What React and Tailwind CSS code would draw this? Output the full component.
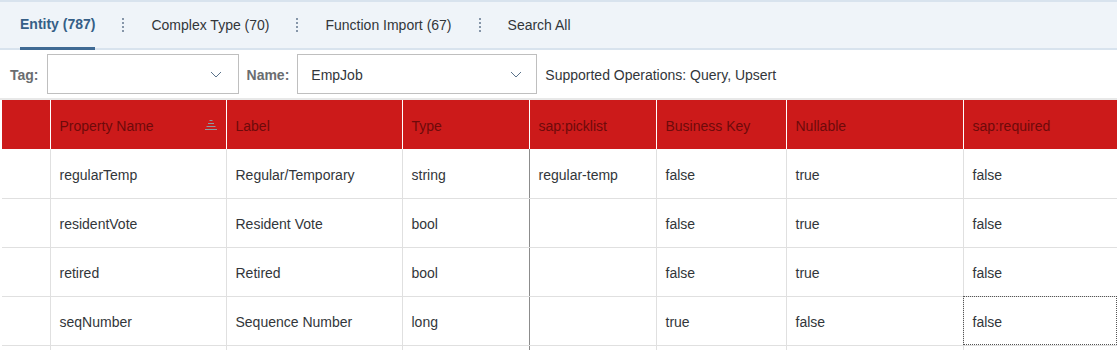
import React from "react";

const cols = [
  { key: "sel", label: "", w: 48 },
  { key: "name", label: "Property Name", w: 176, sort: true },
  { key: "label", label: "Label", w: 176 },
  { key: "type", label: "Type", w: 127 },
  { key: "pick", label: "sap:picklist", w: 127 },
  { key: "bkey", label: "Business Key", w: 130 },
  { key: "nullable", label: "Nullable", w: 177 },
  { key: "req", label: "sap:required", w: 154 },
];

const rows = [
  { name: "regularTemp", label: "Regular/Temporary", type: "string", pick: "regular-temp", bkey: "false", nullable: "true", req: "false" },
  { name: "residentVote", label: "Resident Vote", type: "bool", pick: "", bkey: "false", nullable: "true", req: "false" },
  { name: "retired", label: "Retired", type: "bool", pick: "", bkey: "false", nullable: "true", req: "false" },
  { name: "seqNumber", label: "Sequence Number", type: "long", pick: "", bkey: "true", nullable: "false", req: "false", focus: true },
  { name: "", label: "", type: "", pick: "", bkey: "", nullable: "", req: "" },
];

const Dots = () => (
  <div className="flex flex-col gap-[2px] px-[27px]">
    <span className="w-[2px] h-[2px] bg-[#8696a9]" />
    <span className="w-[2px] h-[2px] bg-[#8696a9]" />
    <span className="w-[2px] h-[2px] bg-[#8696a9]" />
    <span className="w-[2px] h-[2px] bg-[#8696a9]" />
  </div>
);

const Chevron = () => (
  <svg width="12" height="7" viewBox="0 0 12 7" fill="none">
    <path d="M1 1l5 5 5-5" stroke="#5b738b" strokeWidth="1" />
  </svg>
);

const SortIcon = () => (
  <svg width="12" height="10" viewBox="0 0 12 10">
    <rect x="4.5" y="0" width="3" height="1" fill="#8c9aa0" />
    <rect x="3" y="3" width="6" height="1" fill="#8c9aa0" />
    <rect x="1.5" y="6" width="9" height="1" fill="#8c9aa0" />
    <rect x="0" y="9" width="12" height="1" fill="#8c9aa0" />
  </svg>
);

const App = () => {
  return (
    <div
      className="w-[1117px] h-[350px] overflow-hidden bg-white text-[#32363a] text-[14px]"
      style={{ fontFamily: '"Liberation Sans", Arial, sans-serif' }}
    >
      {/* tabs */}
      <div className="h-[50px] bg-[#eff4f9] border-t-2 border-b-2 border-[#d8e3ee] flex items-stretch pl-[20px]">
        <div className="flex items-center text-[#355f87] font-bold border-b-[3px] border-[#3f6a94] -mb-[2px]">Entity (787)</div>
        <div className="flex items-center"><Dots /></div>
        <div className="flex items-center">Complex Type (70)</div>
        <div className="flex items-center"><Dots /></div>
        <div className="flex items-center">Function Import (67)</div>
        <div className="flex items-center"><Dots /></div>
        <div className="flex items-center">Search All</div>
      </div>

      {/* filter bar */}
      <div className="h-[50px] flex items-center pl-[10px] border-b-2 border-[#e8e8e8]">
        <span className="font-bold text-[#6a6d70] mr-[8px] pt-[3px]">Tag:</span>
        <div className="w-[192px] h-[40px] border border-[#bfbfbf] flex items-center justify-end pr-[16px]">
          <Chevron />
        </div>
        <span className="font-bold text-[#6a6d70] ml-[8px] mr-[8px] pt-[3px]">Name:</span>
        <div className="w-[240px] h-[40px] border border-[#bfbfbf] flex items-center justify-between pl-[13px] pr-[14px]">
          <span className="pt-[3px]">EmpJob</span>
          <Chevron />
        </div>
        <span className="ml-[8px] pt-[3px]">Supported Operations: Query, Upsert</span>
      </div>

      {/* table */}
      <div className="pl-[2px]">
        <table className="border-collapse table-fixed w-[1115px]">
          <colgroup>
            {cols.map((c) => (
              <col key={c.key} style={{ width: c.w }} />
            ))}
          </colgroup>
          <thead>
            <tr className="h-[49px] bg-[#cc1a1a]">
              {cols.map((c, i) => (
                <th
                  key={c.key}
                  className={
                    "text-left font-normal text-[#6e0a0a] px-[9px] " +
                    (i > 0 ? "border-l border-white" : "")
                  }
                >
                  <div className="flex items-center justify-between pt-[3px]">
                    <span>{c.label}</span>
                    {c.sort && <span className="-mt-[3px]"><SortIcon /></span>}
                  </div>
                </th>
              ))}
            </tr>
          </thead>
          <tbody>
            {rows.map((r, ri) => (
              <tr key={ri} className="h-[49px]">
                {cols.map((c, i) => {
                  let cls = "px-[9px] pt-[4px] border-b border-[#e0e0e0] ";
                  if (i > 0) cls += c.key === "pick" ? "border-l border-l-[#8c8c8c] " : "border-l ";
                  if (r.focus && c.key === "req") cls += "outline-1 outline-dotted outline-[#555] -outline-offset-1 ";
                  return (
                    <td key={c.key} className={cls}>
                      {c.key === "sel" ? "" : r[c.key]}
                    </td>
                  );
                })}
              </tr>
            ))}
          </tbody>
        </table>
      </div>
    </div>
  );
};

export default App;
